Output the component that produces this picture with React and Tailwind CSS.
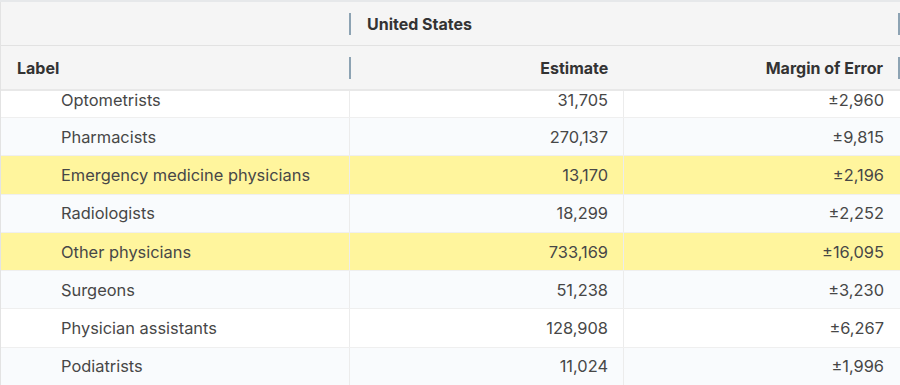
import React from 'react';

const rows = [
  { label: 'Optometrists', estimate: '31,705', moe: '±2,960' },
  { label: 'Pharmacists', estimate: '270,137', moe: '±9,815' },
  { label: 'Emergency medicine physicians', estimate: '13,170', moe: '±2,196', highlight: true },
  { label: 'Radiologists', estimate: '18,299', moe: '±2,252' },
  { label: 'Other physicians', estimate: '733,169', moe: '±16,095', highlight: true },
  { label: 'Surgeons', estimate: '51,238', moe: '±3,230' },
  { label: 'Physician assistants', estimate: '128,908', moe: '±6,267' },
  { label: 'Podiatrists', estimate: '11,024', moe: '±1,996' },
];

const Handle = () => <div className="w-[2px] h-[22px] bg-[#8da3b3] shrink-0" />;

const App = () => {
  return (
    <div className="w-[900px] h-[385px] overflow-hidden bg-white font-['Inter',sans-serif] border-t-2 border-[#e6e8ea]">
      <div className="border-l border-[#e3e3e3] h-full flex flex-col">
        {/* header */}
        <div className="bg-[#f5f5f5] text-[#333] text-[16px] font-bold">
          <div className="h-[44px] flex items-center border-b border-[#e2e2e2]">
            <div className="w-[348px]" />
            <Handle />
            <div className="flex-1 pl-[16px]">United States</div>
            <Handle />
          </div>
          <div className="h-[45px] flex items-center border-b-2 border-[#e8e8e8]">
            <div className="w-[348px] pl-[16px]">Label</div>
            <Handle />
            <div className="w-[258px] text-right">Estimate</div>
            <div className="w-[275px] text-right">Margin of Error</div>
            <div className="ml-[15px]"><Handle /></div>
          </div>
        </div>

        {/* body: first row is scrolled partly out of view */}
        <div className="flex-1 overflow-hidden text-[16.4px] leading-[18px] text-[#474747]">
          {rows.map((row, i) => {
            const bg = row.highlight ? 'bg-[#fff59d]' : i % 2 === 1 ? 'bg-[#f9fbfd]' : 'bg-white';
            const first = i === 0;
            const cell = first ? 'flex items-start pt-[1px] leading-[16px]' : 'flex items-center';
            return (
              <div key={row.label} className={`${first ? 'h-[27px]' : 'h-[38.3px]'} flex border-b border-[#efefef] ${bg}`}>
                <div className={`w-[349px] border-r border-[#ececec] pl-[60px] ${cell}`}>{row.label}</div>
                <div className={`w-[274px] border-r border-[#ececec] justify-end pr-[15px] ${cell}`}>{row.estimate}</div>
                <div className={`w-[275px] justify-end pr-[15px] ${cell}`}>{row.moe}</div>
              </div>
            );
          })}
        </div>
      </div>
    </div>
  );
};

export default App;
